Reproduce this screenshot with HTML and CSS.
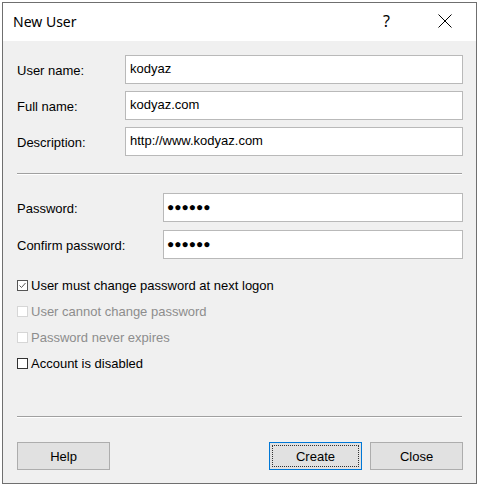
FILE: index.html
```html
<!DOCTYPE html>
<html lang="en">
<head>
<meta charset="utf-8">
<title>New User</title>
<link rel="stylesheet" href="styles.css">
</head>
<body>
<div class="window">
  <div class="titlebar">
    <span class="title">New User</span>
    <span class="help-btn">?</span>
    <span class="close-btn">
      <svg width="14" height="14" viewBox="0 0 14 14"><path d="M0.5 0.5 L13.5 13.5 M13.5 0.5 L0.5 13.5" stroke="#000" stroke-width="1" fill="none"/></svg>
    </span>
  </div>
  <div class="content">
    <div class="grid grid-top">
      <label class="lbl">User name:</label>
      <div class="field">kodyaz</div>
      <label class="lbl">Full name:</label>
      <div class="field">kodyaz.com</div>
      <label class="lbl">Description:</label>
      <div class="field">http://www.kodyaz.com</div>
    </div>
    <div class="sep sep-1"></div>
    <div class="grid grid-pw">
      <label class="lbl">Password:</label>
      <div class="field dots">●●●●●●</div>
      <label class="lbl">Confirm password:</label>
      <div class="field dots">●●●●●●</div>
    </div>
    <div class="checks">
      <div class="check"><span class="box checked"><svg width="9" height="9" viewBox="0 0 9 9"><path d="M1.5 4.5 L3.5 6.5 L7.5 2" stroke="#555" stroke-width="1" fill="none"/></svg></span><span>User must change password at next logon</span></div>
      <div class="check disabled"><span class="box"></span><span>User cannot change password</span></div>
      <div class="check disabled"><span class="box"></span><span>Password never expires</span></div>
      <div class="check"><span class="box"></span><span>Account is disabled</span></div>
    </div>
    <div class="sep sep-2"></div>
    <div class="buttons">
      <button class="btn">Help</button>
      <div class="btn-group">
        <button class="btn default"><span class="focus">Create</span></button>
        <button class="btn">Close</button>
      </div>
    </div>
  </div>
</div>
</body>
</html>
```
FILE: styles.css
```css
html, body {
  margin: 0;
  padding: 0;
  background: #ffffff;
}
body {
  font-family: "Liberation Sans", Arial, sans-serif;
  font-size: 13px;
  color: #000;
}
.window {
  margin: 2px 0 0 2px;
  width: 475px;
  height: 482px;
  box-sizing: border-box;
  border: 1px solid #6f6f6f;
  display: flex;
  flex-direction: column;
  background: #f0f0f0;
}
.titlebar {
  height: 38px;
  background: #ffffff;
  display: flex;
  align-items: center;
  flex-shrink: 0;
}
.title {
  font-family: "Noto Sans", "Open Sans", sans-serif;
  font-size: 14px;
  margin-left: 10px;
  margin-top: -2px;
  flex: 1;
}
.help-btn {
  font-family: "Noto Sans", sans-serif;
  font-size: 16px;
  width: 10px;
  margin-top: -2px;
}
.close-btn {
  display: flex;
  margin-left: 45px;
  margin-right: 24px;
  margin-top: -3px;
}
.content {
  padding: 14px 13px 0 14px;
  flex: 1;
  display: flex;
  flex-direction: column;
}
.grid {
  display: grid;
  align-items: center;
}
.grid-top {
  grid-template-columns: 108px 1fr;
  grid-auto-rows: 29px;
  row-gap: 7px;
}
.grid-pw {
  grid-template-columns: 146px 1fr;
  grid-auto-rows: 29px;
  row-gap: 8px;
  margin-top: 18px;
}
.lbl {
  padding-top: 2px;
}
.field {
  height: 29px;
  box-sizing: border-box;
  border: 1px solid #b9b9b9;
  background: #fff;
  padding: 0 4px;
  display: flex;
  align-items: center;
  padding-bottom: 3px;
}
.dots {
  font-size: 12px;
  letter-spacing: 0;
  padding-left: 3px;
  padding-bottom: 2px;
}
.sep {
  height: 1px;
  border-bottom: 1px solid #ffffff;
  background: #a0a0a0;
  margin-right: 1px;
}
.sep-1 {
  margin-top: 17px;
}
.sep-2 {
  margin-top: 40px;
}
.checks {
  margin-top: 13px;
  display: flex;
  flex-direction: column;
}
.check {
  height: 26px;
  display: flex;
  align-items: center;
  gap: 3px;
}
.check.disabled {
  color: #8d8d8d;
}
.box {
  width: 11px;
  height: 11px;
  box-sizing: border-box;
  border: 1px solid #333;
  background: #fff;
  display: flex;
  align-items: center;
  justify-content: center;
}
.box.checked {
  border-color: #555;
}
.check.disabled .box {
  border-color: #d6d6d6;
}
.buttons {
  margin-top: 24px;
  display: flex;
  justify-content: space-between;
}
.btn-group {
  display: flex;
  gap: 8px;
}
.btn {
  width: 93px;
  height: 28px;
  box-sizing: border-box;
  border: 1px solid #adadad;
  background: #e1e1e1;
  font-family: "Liberation Sans", Arial, sans-serif;
  font-size: 13px;
  color: #000;
  padding: 0;
  display: flex;
  align-items: center;
  justify-content: center;
}
.btn.default {
  border: 1px solid #0078d7;
  padding: 2px;
}
.btn.default .focus {
  flex: 1;
  align-self: stretch;
  display: flex;
  align-items: center;
  justify-content: center;
  border: 1px dotted #333;
}
```
